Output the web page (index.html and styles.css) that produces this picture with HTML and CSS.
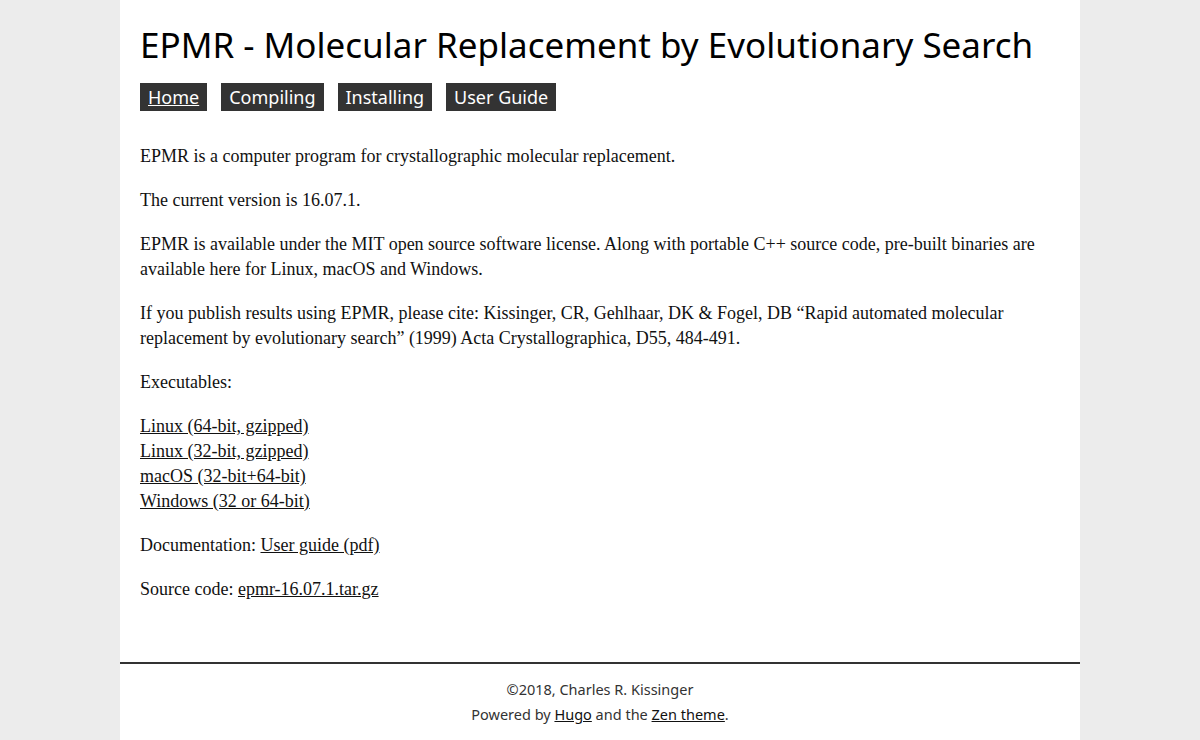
FILE: index.html
```html
<!DOCTYPE html>
<html lang="en">
<head>
<meta charset="utf-8">
<title>EPMR - Molecular Replacement by Evolutionary Search</title>
<link rel="stylesheet" href="styles.css">
</head>
<body>
<div class="page">
  <header class="header">
    <h1 class="title">EPMR - Molecular Replacement by Evolutionary Search</h1>
    <nav class="nav">
      <a class="nav-item nav-active" href="#">Home</a>
      <a class="nav-item" href="#">Compiling</a>
      <a class="nav-item" href="#">Installing</a>
      <a class="nav-item" href="#">User Guide</a>
    </nav>
  </header>
  <main class="content">
    <p>EPMR is a computer program for crystallographic molecular replacement.</p>
    <p>The current version is 16.07.1.</p>
    <p>EPMR is available under the MIT open source software license. Along with portable C++ source code, pre-built binaries are available here for Linux, macOS and Windows.</p>
    <p>If you publish results using EPMR, please cite: Kissinger, CR, Gehlhaar, DK &amp; Fogel, DB “Rapid automated molecular replacement by evolutionary search” (1999) Acta Crystallographica, D55, 484-491.</p>
    <p>Executables:</p>
    <p><a href="#">Linux (64-bit, gzipped)</a><br>
    <a href="#">Linux (32-bit, gzipped)</a><br>
    <a href="#">macOS (32-bit+64-bit)</a><br>
    <a href="#">Windows (32 or 64-bit)</a></p>
    <p>Documentation: <a href="#">User guide (pdf)</a></p>
    <p>Source code: <a href="#">epmr-16.07.1.tar.gz</a></p>
  </main>
  <footer class="footer">
    <p>©2018, Charles R. Kissinger</p>
    <p>Powered by <a href="#">Hugo</a> and the <a href="#">Zen theme</a>.</p>
  </footer>
</div>
</body>
</html>
```
FILE: styles.css
```css
html, body {
  margin: 0;
  padding: 0;
}
body {
  background: #ececec;
  color: #111;
}
.page {
  width: 960px;
  margin: 0 auto;
  background: #fff;
  min-height: 740px;
  display: flex;
  flex-direction: column;
}
.header {
  padding: 22px 20px 0;
}
.title {
  font-family: "Noto Sans", "Open Sans", sans-serif;
  font-weight: 400;
  font-size: 35px;
  line-height: 46px;
  margin: 0;
  color: #000;
}
.nav {
  display: flex;
  gap: 14px;
  margin-top: 15px;
}
.nav-item {
  font-family: "Noto Sans", "Open Sans", sans-serif;
  font-size: 18px;
  line-height: 28px;
  height: 28px;
  padding: 0 8px;
  background: #333;
  color: #fff;
  text-decoration: none;
}
.nav-active {
  text-decoration: underline;
}
.content {
  padding: 33px 20px 0;
  font-family: "Liberation Serif", "Times New Roman", serif;
  font-size: 18px;
  line-height: 25px;
  color: #111;
  flex: 1;
}
.content p {
  margin: 0 0 19px;
}
.content a {
  color: #111;
}
.footer {
  border-top: 2px solid #333;
  padding: 13px 0 13px;
  text-align: center;
  font-family: "Noto Sans", "Open Sans", sans-serif;
  font-size: 14.5px;
  line-height: 25px;
  color: #333;
}
.footer p {
  margin: 0;
}
.footer a {
  color: #111;
}
```
